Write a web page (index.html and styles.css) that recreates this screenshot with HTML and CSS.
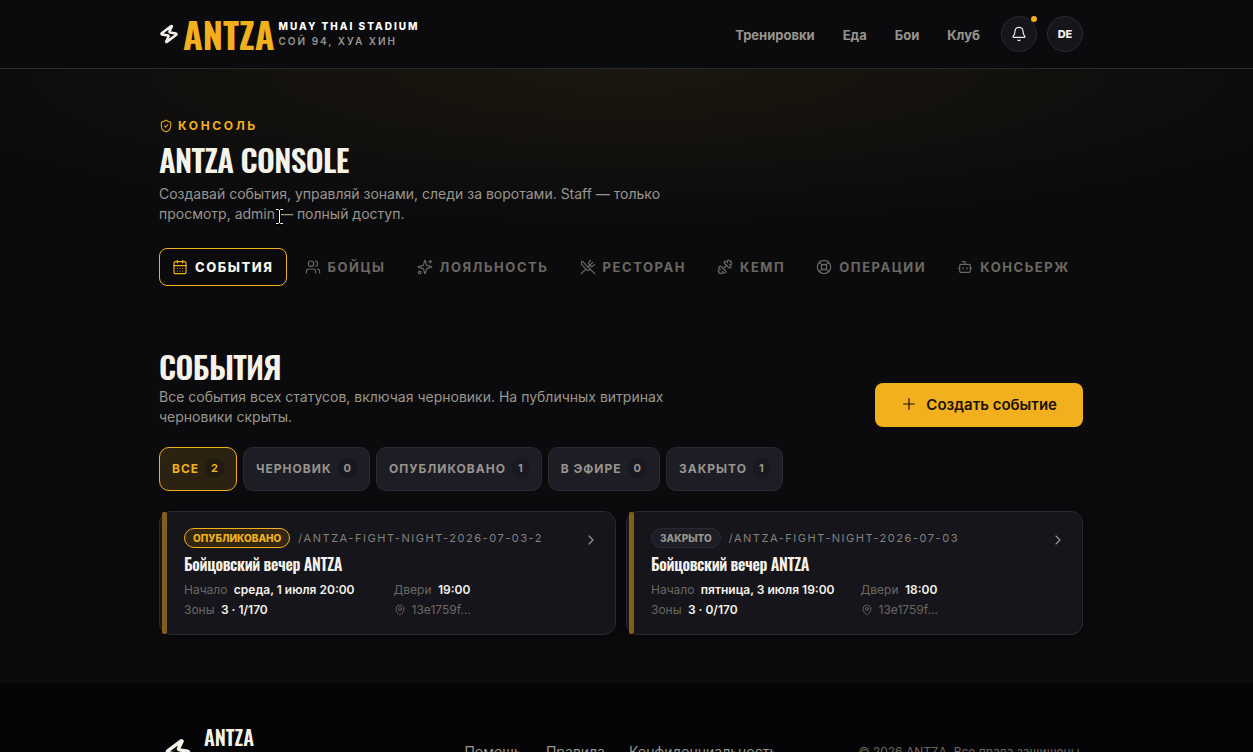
FILE: index.html
```html
<!DOCTYPE html>
<html lang="ru">
<head>
    <meta charset="UTF-8">
    <meta name="viewport" content="width=device-width, initial-scale=1.0">
    <title>ANTZA Console</title>
    <link rel="stylesheet" href="styles.css">
</head>
<body>

<header class="site-header">
    <div class="wrap header-row">
        <a class="brand" href="#">
            <svg class="icon bolt" viewBox="0 0 24 24"><path transform="rotate(9 12 12)" d="M4 14a1 1 0 0 1-.78-1.63l9.9-10.2a.5.5 0 0 1 .86.46l-1.92 6.02A1 1 0 0 0 13 10h7a1 1 0 0 1 .78 1.63l-9.9 10.2a.5.5 0 0 1-.86-.46l1.92-6.02A1 1 0 0 0 11 14z"/></svg>
            <span class="brand-name">ANTZA</span>
            <span class="brand-sub">
                <strong>MUAY THAI STADIUM</strong>
                <span>СОЙ 94, ХУА ХИН</span>
            </span>
        </a>
        <nav class="main-nav">
            <a href="#">Тренировки</a>
            <a href="#">Еда</a>
            <a href="#">Бои</a>
            <a href="#">Клуб</a>
        </nav>
        <div class="header-actions">
            <button class="round-btn" type="button" aria-label="Уведомления">
                <svg class="icon" viewBox="0 0 24 24"><path d="M10.27 21a2 2 0 0 0 3.46 0"/><path d="M3.26 15.33A1 1 0 0 0 4 17h16a1 1 0 0 0 .74-1.67C19.41 13.96 18 12.5 18 8A6 6 0 0 0 6 8c0 4.5-1.41 5.96-2.74 7.33"/></svg>
                <span class="dot"></span>
            </button>
            <button class="round-btn" type="button">DE</button>
        </div>
    </div>
</header>

<main>
    <div class="wrap">
        <section class="hero">
            <p class="eyebrow">
                <svg class="icon" viewBox="0 0 24 24"><path d="M20 13c0 5-3.5 7.5-7.66 8.95a1 1 0 0 1-.67-.01C7.5 20.5 4 18 4 13V6a1 1 0 0 1 1-1c2 0 4.5-1.2 6.24-2.72a1.17 1.17 0 0 1 1.52 0C14.51 3.81 17 5 19 5a1 1 0 0 1 1 1z"/><path d="m9 12 2 2 4-4"/></svg>
                КОНСОЛЬ
            </p>
            <h1>ANTZA CONSOLE</h1>
            <p class="lead">Создавай события, управляй зонами, следи за воротами. Staff — только просмотр, admin<span class="cursor"><svg viewBox="0 0 9 17"><path class="cursor-edge" d="M1 1.5h2.5l1 1 1-1H8M1 15.5h2.5l1-1 1 1H8M4.5 2v13"/><path class="cursor-core" d="M1 1.5h2.5l1 1 1-1H8M1 15.5h2.5l1-1 1 1H8M4.5 2v13"/></svg></span> — полный доступ.</p>
        </section>

        <nav class="tabs">
            <a class="tab active" href="#">
                <svg class="icon" viewBox="0 0 24 24"><path d="M8 2v4M16 2v4M3 10h18M8 14h.01M12 14h.01M16 14h.01M8 18h.01M12 18h.01M16 18h.01"/><rect x="3" y="4" width="18" height="18" rx="2"/></svg>
                СОБЫТИЯ
            </a>
            <a class="tab" href="#">
                <svg class="icon" viewBox="0 0 24 24"><path d="M16 21v-2a4 4 0 0 0-4-4H6a4 4 0 0 0-4 4v2M16 3.13a4 4 0 0 1 0 7.74M22 21v-2a4 4 0 0 0-3-3.87"/><circle cx="9" cy="7" r="4"/></svg>
                БОЙЦЫ
            </a>
            <a class="tab" href="#">
                <svg class="icon" viewBox="0 0 24 24"><path d="M9.94 15.5A2 2 0 0 0 8.5 14.06l-6.14-1.58a.5.5 0 0 1 0-.96L8.5 9.94A2 2 0 0 0 9.94 8.5l1.58-6.14a.5.5 0 0 1 .96 0l1.58 6.14a2 2 0 0 0 1.44 1.44l6.14 1.58a.5.5 0 0 1 0 .96l-6.14 1.58a2 2 0 0 0-1.44 1.44l-1.58 6.14a.5.5 0 0 1-.96 0z"/><path d="M20 2v4M22 4h-4"/><circle cx="4" cy="20" r="2"/></svg>
                ЛОЯЛЬНОСТЬ
            </a>
            <a class="tab" href="#">
                <svg class="icon" viewBox="0 0 24 24"><path d="m16 2-2.3 2.3a3 3 0 0 0 0 4.2l1.8 1.8a3 3 0 0 0 4.2 0L22 8"/><path d="M15 15 3.3 3.3a4.2 4.2 0 0 0 0 6l7.3 7.3c.7.7 2 .7 2.8 0L15 15Zm0 0 7 7"/><path d="m2.1 21.8 6.4-6.3M19 5l-7 7"/></svg>
                РЕСТОРАН
            </a>
            <a class="tab" href="#">
                <svg class="icon" viewBox="0 0 24 24"><path d="M17.6 12.77a2 2 0 1 0 2.83-2.83l-1.77-1.77a2 2 0 0 0 2.83-2.83l-2.83-2.83a2 2 0 0 0-2.83 2.83l-1.77-1.77a2 2 0 1 0-2.83 2.83z"/><path d="m2.5 21.5 1.4-1.4M20.1 3.9l1.4-1.4M9.6 14.4l4.8-4.8"/><path d="M5.34 21.49a2 2 0 1 0 2.83-2.83l1.77 1.77a2 2 0 1 0 2.83-2.83l-6.37-6.37a2 2 0 1 0-2.83 2.83l1.77 1.77a2 2 0 0 0-2.83 2.83z"/></svg>
                КЕМП
            </a>
            <a class="tab" href="#">
                <svg class="icon" viewBox="0 0 24 24"><circle cx="12" cy="12" r="10"/><circle cx="12" cy="12" r="4"/><path d="m4.93 4.93 4.24 4.24M14.83 9.17l4.24-4.24M14.83 14.83l4.24 4.24M9.17 14.83l-4.24 4.24"/></svg>
                ОПЕРАЦИИ
            </a>
            <a class="tab" href="#">
                <svg class="icon" viewBox="0 0 24 24"><path d="M12 8V4H8M2 14h2M20 14h2M15 13v2M9 13v2"/><rect x="4" y="8" width="16" height="12" rx="2"/></svg>
                КОНСЬЕРЖ
            </a>
        </nav>

        <section class="events">
            <div class="section-head">
                <div>
                    <h2>СОБЫТИЯ</h2>
                    <p class="lead">Все события всех статусов, включая черновики. На публичных витринах черновики скрыты.</p>
                </div>
                <button class="create-btn" type="button">
                    <svg class="icon" viewBox="0 0 24 24"><path d="M4 12h16M12 4v16"/></svg>
                    Создать событие
                </button>
            </div>

            <div class="filters">
                <button class="filter active" type="button">ВСЕ <span class="count">2</span></button>
                <button class="filter" type="button">ЧЕРНОВИК <span class="count">0</span></button>
                <button class="filter" type="button">ОПУБЛИКОВАНО <span class="count">1</span></button>
                <button class="filter" type="button">В ЭФИРЕ <span class="count">0</span></button>
                <button class="filter" type="button">ЗАКРЫТО <span class="count">1</span></button>
            </div>

            <div class="cards">
                <a class="card" href="#">
                    <div class="card-top">
                        <span class="status published">ОПУБЛИКОВАНО</span>
                        <span class="slug">/ANTZA-FIGHT-NIGHT-2026-07-03-2</span>
                        <svg class="icon chevron" viewBox="0 0 24 24"><path d="m9 18 6-6-6-6"/></svg>
                    </div>
                    <h3>Бойцовский вечер ANTZA</h3>
                    <div class="meta">
                        <span>Начало <b>среда, 1 июля 20:00</b></span>
                        <span>Двери <b>19:00</b></span>
                        <span>Зоны <b>3 · 1/170</b></span>
                        <span class="place"><svg class="icon" viewBox="0 0 24 24"><path d="M20 10c0 4.99-5.54 10.19-7.4 11.8a1 1 0 0 1-1.2 0C9.54 20.19 4 14.99 4 10a8 8 0 0 1 16 0"/><circle cx="12" cy="10" r="3"/></svg>13e1759f…</span>
                    </div>
                </a>
                <a class="card" href="#">
                    <div class="card-top">
                        <span class="status">ЗАКРЫТО</span>
                        <span class="slug">/ANTZA-FIGHT-NIGHT-2026-07-03</span>
                        <svg class="icon chevron" viewBox="0 0 24 24"><path d="m9 18 6-6-6-6"/></svg>
                    </div>
                    <h3>Бойцовский вечер ANTZA</h3>
                    <div class="meta">
                        <span>Начало <b>пятница, 3 июля 19:00</b></span>
                        <span>Двери <b>18:00</b></span>
                        <span>Зоны <b>3 · 0/170</b></span>
                        <span class="place"><svg class="icon" viewBox="0 0 24 24"><path d="M20 10c0 4.99-5.54 10.19-7.4 11.8a1 1 0 0 1-1.2 0C9.54 20.19 4 14.99 4 10a8 8 0 0 1 16 0"/><circle cx="12" cy="10" r="3"/></svg>13e1759f…</span>
                    </div>
                </a>
            </div>
        </section>
    </div>
</main>

<footer class="site-footer">
    <div class="wrap footer-row">
        <div class="footer-brand">
            <svg class="icon bolt" viewBox="0 0 24 24"><path transform="rotate(9 12 12)" d="M4 14a1 1 0 0 1-.78-1.63l9.9-10.2a.5.5 0 0 1 .86.46l-1.92 6.02A1 1 0 0 0 13 10h7a1 1 0 0 1 .78 1.63l-9.9 10.2a.5.5 0 0 1-.86-.46l1.92-6.02A1 1 0 0 0 11 14z"/></svg>
            <div class="footer-text">
                <div class="footer-name">ANTZA</div>
                <div class="footer-sub">Стадион и клуб муай тай</div>
            </div>
        </div>
        <nav class="footer-nav">
            <a href="#">Помощь</a>
            <a href="#">Правила</a>
            <a href="#">Конфиденциальность</a>
        </nav>
        <p class="copyright">© 2026 ANTZA. Все права защищены.</p>
    </div>
</footer>

</body>
</html>
```
FILE: styles.css
```css
:root {
    --bg: #0b0b0d;
    --surface: #15151b;
    --surface-2: #1d1d25;
    --line: #2a2a31;
    --text: #f5f2ea;
    --muted: #99958d;
    --dim: #6b6862;
    --gold: #f2b01e;
    --display: Oswald, "Liberation Sans Narrow", sans-serif;
}
* {
    box-sizing: border-box;
}
body {
    margin: 0;
    background: var(--bg);
    color: var(--text);
    font-family: Inter, sans-serif;
    font-size: 14px;
    line-height: 20px;
}
h1, h2, h3, p {
    margin: 0;
}
a {
    color: inherit;
    text-decoration: none;
}
button {
    font-family: inherit;
    cursor: pointer;
}
.icon {
    width: 16px;
    height: 16px;
    flex: none;
    fill: none;
    stroke: currentColor;
    stroke-width: 1.75;
    stroke-linecap: round;
    stroke-linejoin: round;
}
.wrap {
    max-width: 924px;
    margin: 0 auto;
}

/* header */
.site-header, main, .site-footer {
    padding: 0 35px 0 24px;
}
.site-header {
    border-bottom: 1px solid var(--line);
}
.header-row {
    display: flex;
    align-items: center;
    height: 68px;
}
.brand {
    display: flex;
    align-items: center;
    gap: 4px;
}
.bolt {
    width: 20px;
    height: 20px;
    stroke-width: 3;
}
.brand-name {
    font-family: var(--display);
    font-size: 36px;
    line-height: 38px;
    font-weight: 700;
    color: var(--gold);
}
.brand-sub {
    display: flex;
    flex-direction: column;
    font-size: 10px;
    line-height: 15px;
    letter-spacing: 2px;
    font-weight: 600;
    color: var(--muted);
}
.brand-sub strong {
    font-weight: 800;
    color: #fff;
}
.main-nav {
    display: flex;
    gap: 28px;
    margin-left: auto;
    padding-top: 2px;
    font-size: 13px;
    font-weight: 700;
    color: var(--muted);
}
.header-actions {
    display: flex;
    gap: 10px;
    margin-left: 21px;
}
.round-btn {
    position: relative;
    display: flex;
    align-items: center;
    justify-content: center;
    width: 36px;
    height: 36px;
    padding: 0;
    border: 1px solid var(--line);
    border-radius: 50%;
    background: var(--surface);
    color: var(--text);
    font-size: 11px;
    font-weight: 800;
}
.dot {
    position: absolute;
    top: -1px;
    right: -1px;
    width: 6px;
    height: 6px;
    border-radius: 50%;
    background: var(--gold);
}

/* hero */
main {
    padding-bottom: 48px;
    background: radial-gradient(ellipse 720px 150px at 50% 0, #1b170e, transparent);
}
.hero {
    padding-top: 48px;
}
.eyebrow {
    display: flex;
    align-items: center;
    gap: 5px;
    line-height: 18px;
    font-size: 12px;
    font-weight: 700;
    letter-spacing: 0.22em;
    color: var(--gold);
}
.eyebrow .icon {
    width: 14px;
    height: 14px;
}
h1, h2 {
    font-family: var(--display);
    font-size: 31px;
    line-height: 36px;
    font-weight: 600;
    letter-spacing: -0.02em;
}
h1 {
    margin: 6px 0 7px;
}
.lead {
    max-width: 520px;
    color: var(--muted);
}
.cursor {
    position: relative;
}
.cursor svg {
    position: absolute;
    top: 3px;
    left: 0;
    width: 9px;
    height: 17px;
    fill: none;
}
.cursor-edge {
    stroke: #000;
    stroke-width: 3;
}
.cursor-core {
    stroke: #fff;
}

/* tabs */
.tabs {
    display: flex;
    gap: 5px;
    margin-top: 24px;
}
.tab {
    display: flex;
    align-items: center;
    gap: 7px;
    height: 38px;
    padding: 0 12px;
    border: 1px solid transparent;
    border-radius: 8px;
    font-size: 13px;
    font-weight: 700;
    letter-spacing: 0.12em;
    white-space: nowrap;
    color: var(--dim);
}
.tab.active {
    border-color: var(--gold);
    font-weight: 800;
    color: var(--text);
}
.tab.active .icon {
    color: var(--gold);
}

/* events */
.events {
    padding-top: 62px;
}
.section-head {
    display: flex;
    align-items: flex-end;
    justify-content: space-between;
}
h2 {
    margin-bottom: 3px;
}
.create-btn {
    display: flex;
    align-items: center;
    gap: 9px;
    height: 44px;
    padding: 0 26px 2px;
    border: 0;
    border-radius: 8px;
    background: var(--gold);
    color: #1a1206;
    font-size: 15px;
    font-weight: 600;
}
.filters {
    display: flex;
    flex-wrap: wrap;
    gap: 6px;
    margin: 20px 0;
}
.filter {
    display: flex;
    align-items: center;
    gap: 6px;
    height: 44px;
    padding: 0 12px 2px;
    border: 1px solid var(--line);
    border-radius: 10px;
    background: var(--surface-2);
    color: var(--muted);
    font-size: 12px;
    font-weight: 700;
    letter-spacing: 1px;
}
.filter.active {
    border-color: var(--gold);
    background: #2b2212;
    color: var(--gold);
}
.count {
    padding: 0 6px;
    border-radius: 10px;
    background: #18181e;
    font-size: 11px;
    line-height: 20px;
    letter-spacing: 0;
}
.filter.active .count {
    background: #201a11;
}
.cards {
    display: grid;
    grid-template-columns: 1fr 1fr;
    gap: 10px;
}
.card {
    position: relative;
    padding: 16px 16px 14px 24px;
    border: 1px solid var(--line);
    border-radius: 12px;
    background: var(--surface);
    box-shadow: 0 2px 8px #00000066;
}
.card::before {
    content: "";
    position: absolute;
    top: 0;
    bottom: 0;
    left: 2px;
    width: 5px;
    border-radius: 2px;
    background: #806018;
}
.card-top {
    display: flex;
    align-items: center;
    gap: 8px;
    height: 20px;
}
.status {
    padding: 0 8px;
    border: 1px solid var(--line);
    border-radius: 10px;
    background: var(--surface-2);
    color: var(--muted);
    font-size: 10px;
    line-height: 18px;
    font-weight: 800;
}
.status.published {
    border-color: var(--gold);
    background: #332711;
    color: var(--gold);
}
.slug {
    font-size: 11px;
    letter-spacing: 0.14em;
    color: #84817b;
}
.chevron {
    margin-top: 4px;
    margin-left: auto;
    color: var(--muted);
}
h3 {
    margin: 4px 0;
    font-family: var(--display);
    font-size: 16px;
    line-height: 24px;
    font-weight: 600;
    letter-spacing: -0.02em;
}
.meta {
    display: grid;
    grid-template-columns: 1fr 1fr;
    column-gap: 4px;
    font-size: 12px;
    color: var(--dim);
}
.meta b {
    margin-left: 3px;
    font-weight: 600;
    color: var(--text);
}
.place {
    display: flex;
    align-items: center;
    gap: 6px;
}
.place .icon {
    width: 12px;
    height: 12px;
}

/* footer */
.site-footer {
    background: #050507;
}
.footer-row {
    display: flex;
    align-items: center;
    justify-content: space-between;
    padding: 40px 0;
}
.footer-brand {
    display: flex;
    align-items: center;
    gap: 12px;
    min-height: 58px;
    margin-right: 20px;
    padding-left: 5px;
}
.footer-brand .bolt {
    width: 28px;
    height: 28px;
}
.footer-text {
    align-self: flex-start;
}
.footer-name {
    font-family: var(--display);
    font-size: 20px;
    line-height: 28px;
    font-weight: 600;
}
.footer-sub {
    font-size: 13px;
    color: var(--muted);
}
.footer-nav {
    display: flex;
    gap: 24px;
    font-size: 14px;
    color: var(--muted);
}
.copyright {
    font-size: 12px;
    color: var(--dim);
}
```
